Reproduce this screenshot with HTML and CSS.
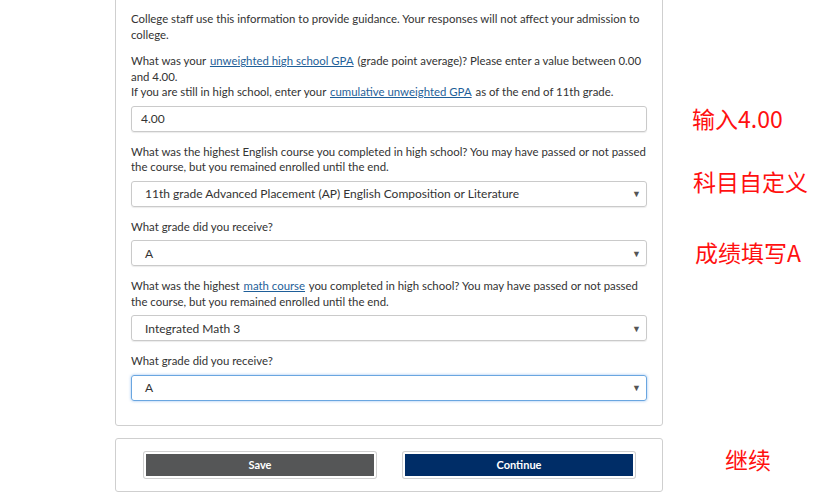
FILE: index.html
```html
<!DOCTYPE html>
<html>
<head>
<meta charset="utf-8">
<link rel="stylesheet" href="styles.css">
</head>
<body>
<div class="page">
  <div class="main">
    <div class="card form">
      <p class="text">College staff use this information to provide guidance. Your responses will not affect your admission to college.</p>
      <p class="text q1">What was your <a href="#">unweighted high school GPA</a> (grade point average)? Please enter a value between 0.00 and 4.00.<br>If you are still in high school, enter your <a href="#">cumulative unweighted GPA</a> as of the end of 11th grade.</p>
      <div class="field input">4.00</div>
      <p class="text q">What was the highest English course you completed in high school? You may have passed or not passed the course, but you remained enrolled until the end.</p>
      <div class="field select"><span>11th grade Advanced Placement (AP) English Composition or Literature</span><span class="arrow">&#9660;</span></div>
      <p class="text q">What grade did you receive?</p>
      <div class="field select"><span>A</span><span class="arrow">&#9660;</span></div>
      <p class="text q">What was the highest <a href="#">math course</a> you completed in high school? You may have passed or not passed the course, but you remained enrolled until the end.</p>
      <div class="field select"><span>Integrated Math 3</span><span class="arrow">&#9660;</span></div>
      <p class="text q">What grade did you receive?</p>
      <div class="field select focus"><span>A</span><span class="arrow">&#9660;</span></div>
    </div>
    <div class="card actions">
      <button class="btn save">Save</button>
      <button class="btn continue">Continue</button>
    </div>
  </div>
  <div class="note n1">输入4.00</div>
  <div class="note n2">科目自定义</div>
  <div class="note n3">成绩填写A</div>
  <div class="note n4">继续</div>
</div>
</body>
</html>
```
FILE: styles.css
```css
html, body {
  margin: 0;
  padding: 0;
  background: #fff;
}
.page {
  position: relative;
  width: 831px;
  height: 503px;
  overflow: hidden;
  font-family: "Source Sans Pro", Lato, "Open Sans", sans-serif;
}
.main {
  width: 548px;
  margin-left: 115px;
  display: flex;
  flex-direction: column;
  gap: 12px;
}
.card {
  border: 1px solid #cfcfcf;
  border-radius: 3px;
  background: #fff;
  box-sizing: border-box;
}
.form {
  margin-top: -10px;
  padding: 20px 15px 24px 15px;
  display: flex;
  flex-direction: column;
}
.text {
  margin: 0;
  font-size: 11.4px;
  line-height: 15.5px;
  color: #333;
}
.text a {
  color: #1f5f99;
  text-decoration: underline;
  padding: 0 1px;
}
.q1 { margin-top: 11px; }
.q { margin-top: 12px; }
.field {
  box-sizing: border-box;
  height: 26px;
  border: 1px solid #cacaca;
  border-radius: 3px;
  box-shadow: 0 1px 1px rgba(0,0,0,0.08);
  display: flex;
  align-items: center;
  font-size: 12px;
  color: #333;
}
.input {
  margin-top: 6px;
  padding-left: 9px;
}
.select {
  margin-top: 6px;
  padding: 0 5px 0 13px;
  justify-content: space-between;
}
.arrow {
  font-size: 9px;
  color: #555;
}
.focus {
  border-color: #6aa6e0;
  box-shadow: 0 0 3px rgba(80,150,230,0.6);
}
.actions {
  height: 54px;
  display: flex;
  align-items: center;
  justify-content: center;
  gap: 27px;
  padding-left: 1px;
}
.btn {
  width: 232px;
  height: 26px;
  border: 2px solid #fff;
  box-shadow: 0 0 0 1px #d0d0d0;
  border-radius: 2px;
  color: #fff;
  font-family: inherit;
  font-size: 11px;
  font-weight: bold;
  padding: 0;
}
.save { background: #555657; }
.continue { background: #002d67; }
.note {
  position: absolute;
  color: #ff1010;
  font-family: "Noto Sans CJK SC", sans-serif;
  font-size: 23px;
  line-height: 1;
}
.n1 { left: 692px; top: 107px; }
.n2 { left: 693px; top: 170px; }
.n3 { left: 695px; top: 241px; }
.n4 { left: 725px; top: 448px; }
```
